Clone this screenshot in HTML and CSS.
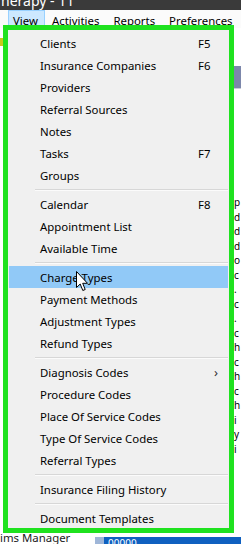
FILE: index.html
```html
<!DOCTYPE html>
<html lang="en">
<head>
    <meta charset="UTF-8">
    <title>Therapy - View menu</title>
    <link rel="stylesheet" href="styles.css">
</head>
<body>
    <div class="app">
        <div class="title-bar"><span class="title-text">herapy - 11</span></div>
        <div class="menu-bar">
            <span class="menu-title active">View</span>
            <span class="menu-title">Activities</span>
            <span class="menu-title">Reports</span>
            <span class="menu-title">Preferences</span>
        </div>
        <div class="workspace">
            <div class="side-left">
                <span class="app-icon"></span>
            </div>
            <div class="side-right">
                <div class="header-block"></div>
                <div class="cell-list">
                    <span>p</span><span>d</span><span>d</span><span>d</span><span>o</span><span>c</span><span>.</span><span>c</span><span>.</span><span>c</span><span>h</span><span>c</span><span>h</span><span>c</span><span>h</span><span>i</span><span>y</span><span>i</span>
                </div>
            </div>
        </div>
        <div class="status-row">
            <span class="status-label">ims Manager</span>
            <div class="grid-row"><span>00000</span></div>
        </div>
    </div>

    <div class="dropdown">
        <div class="menu-list">
            <div class="menu-item"><span>Clients</span><span class="shortcut">F5</span></div>
            <div class="menu-item"><span>Insurance Companies</span><span class="shortcut">F6</span></div>
            <div class="menu-item"><span>Providers</span></div>
            <div class="menu-item"><span>Referral Sources</span></div>
            <div class="menu-item"><span>Notes</span></div>
            <div class="menu-item"><span>Tasks</span><span class="shortcut">F7</span></div>
            <div class="menu-item"><span>Groups</span></div>
            <div class="menu-sep"></div>
            <div class="menu-item"><span>Calendar</span><span class="shortcut">F8</span></div>
            <div class="menu-item"><span>Appointment List</span></div>
            <div class="menu-item"><span>Available Time</span></div>
            <div class="menu-sep"></div>
            <div class="menu-item hovered"><span>Charge Types</span>
                <svg class="cursor" width="13" height="21" viewBox="0 0 13 21">
                    <path d="M0.5 0.5 L0.5 16.5 L4.2 13 L6.8 19.5 L9.2 18.5 L6.7 12.3 L11.5 12.3 Z" fill="#fff" stroke="#000" stroke-width="1" stroke-linejoin="round"/>
                </svg>
            </div>
            <div class="menu-item"><span>Payment Methods</span></div>
            <div class="menu-item"><span>Adjustment Types</span></div>
            <div class="menu-item"><span>Refund Types</span></div>
            <div class="menu-sep"></div>
            <div class="menu-item"><span>Diagnosis Codes</span><span class="submenu-arrow">&#8250;</span></div>
            <div class="menu-item"><span>Procedure Codes</span></div>
            <div class="menu-item"><span>Place Of Service Codes</span></div>
            <div class="menu-item"><span>Type Of Service Codes</span></div>
            <div class="menu-item"><span>Referral Types</span></div>
            <div class="menu-sep"></div>
            <div class="menu-item"><span>Insurance Filing History</span></div>
            <div class="menu-sep"></div>
            <div class="menu-item"><span>Document Templates</span></div>
        </div>
    </div>
</body>
</html>
```

FILE: styles.css
```css
body {
    margin: 0;
    padding: 0;
    width: 241px;
    height: 544px;
    overflow: hidden;
    position: relative;
    font-family: 'Noto Sans', sans-serif;
    font-size: 11.4px;
    color: #000;
    background: #fff;
}

.app {
    display: flex;
    flex-direction: column;
    height: 544px;
}

.title-bar {
    height: 10px;
    background: #3a3a3a;
    overflow: hidden;
}

.title-text {
    display: block;
    color: #fff;
    font-size: 14px;
    line-height: 14px;
    margin-top: -6px;
    padding-left: 1px;
}

.menu-bar {
    height: 18px;
    display: flex;
    align-items: stretch;
    background: #fbfbfb;
    padding-left: 8px;
}

.menu-title {
    display: flex;
    align-items: center;
    padding: 2px 6px 0 6px;
    border: 1px solid transparent;
    white-space: nowrap;
}

.menu-title.active {
    background: #cce8ff;
    border-color: #99d1ff;
    padding: 2px 6px 0 4px;
}

.workspace {
    flex: 1;
    display: flex;
    justify-content: space-between;
}

.side-left {
    width: 4px;
    padding-top: 10px;
}

.app-icon {
    display: block;
    width: 3px;
    height: 8px;
    background: #c9c81a;
}

.side-right {
    width: 7px;
    display: flex;
    flex-direction: column;
    padding-top: 38px;
}

.header-block {
    height: 22px;
    background: #7c87ab;
    border-bottom: 1px solid #c9cdd8;
}

.cell-list {
    display: flex;
    flex-direction: column;
    padding-top: 106px;
    font-size: 10px;
    line-height: 14.5px;
    overflow: hidden;
    white-space: nowrap;
}

.status-row {
    height: 11px;
    display: flex;
    align-items: flex-start;
    overflow: hidden;
}

.status-label {
    width: 95px;
    line-height: 12px;
    margin-top: -1px;
    color: #222;
}

.grid-row {
    flex: 1;
    margin-top: 4px;
    height: 8px;
    background: #0f60c0;
    border-left: 9px solid #9fb6d8;
    color: #fff;
    font-size: 10px;
    line-height: 12px;
    padding-left: 4px;
}

/* dropdown menu, drawn over the window with the green call-out frame */
.dropdown {
    position: absolute;
    left: 3px;
    top: 25px;
    width: 221px;
    height: 498px;
    border: 5px solid #1fe21f;
    background: #f0f0f0;
    overflow: hidden;
}

.menu-list {
    padding: 2px 1px 0 1px;
    display: flex;
    flex-direction: column;
}

.menu-item {
    height: 22px;
    display: flex;
    align-items: center;
    padding-left: 31px;
    position: relative;
    white-space: nowrap;
}

.menu-item.hovered {
    background: #91c9f7;
}

.shortcut {
    position: absolute;
    left: 189px;
}

.submenu-arrow {
    position: absolute;
    left: 205px;
    font-size: 13px;
    color: #333;
}

.menu-sep {
    height: 7px;
    margin-left: 26px;
    display: flex;
    flex-direction: column;
    justify-content: center;
}

.menu-sep::before {
    content: '';
    display: block;
    height: 1px;
    background: #d7d7d7;
    border-bottom: 1px solid #fbfbfb;
}

.cursor {
    position: absolute;
    left: 67px;
    top: 5px;
}
```
